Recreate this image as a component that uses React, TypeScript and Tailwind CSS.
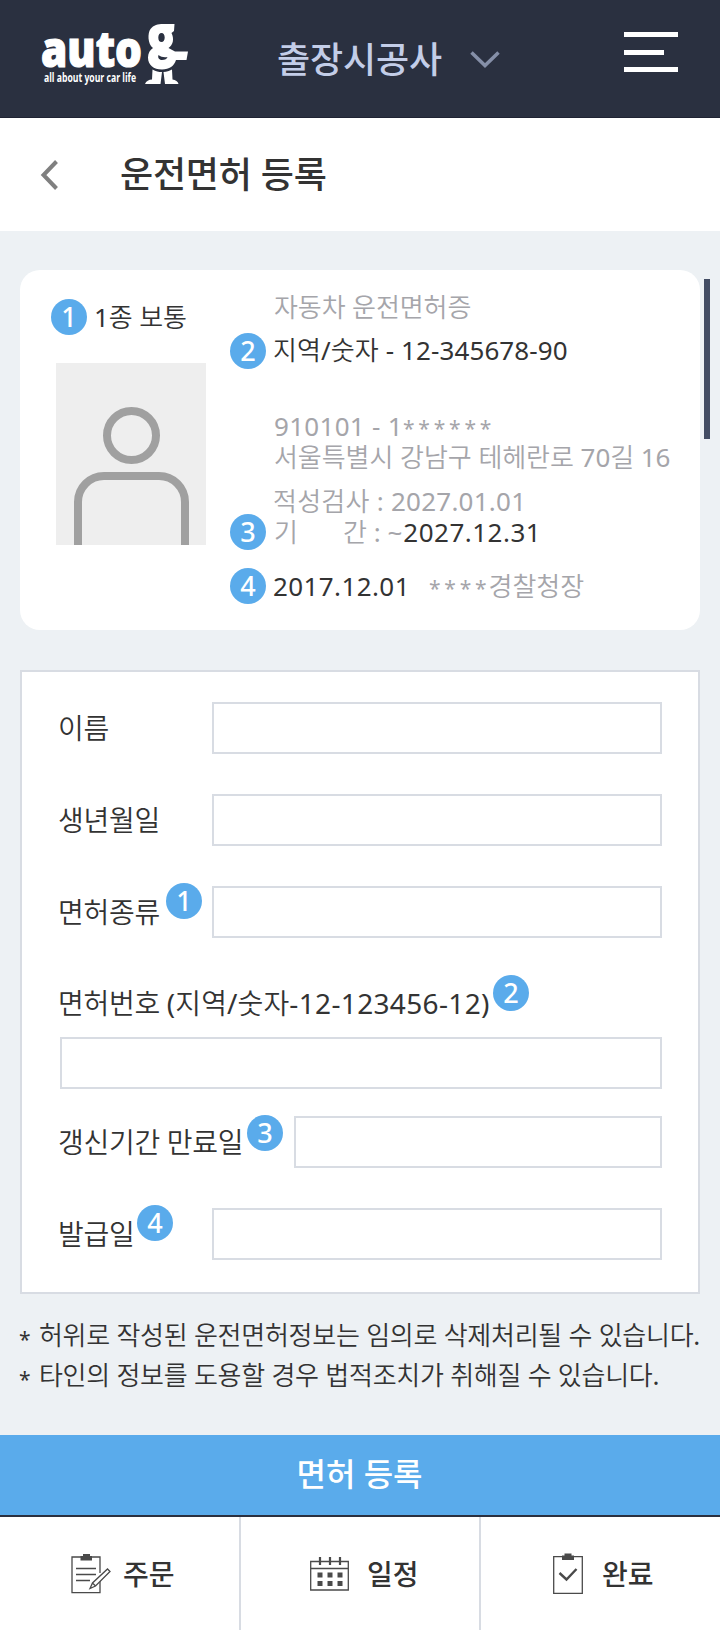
import React from "react";

function Badge({ n, className = "" }: { n: number; className?: string }) {
  return (
    <span
      className={
        "flex h-9 w-9 shrink-0 items-center justify-center rounded-full bg-[#5aabeb] text-[27px] leading-9 font-medium tracking-normal text-white " +
        className
      }
    >
      {n}
    </span>
  );
}

function Stars({ children }: { children: string }) {
  return <span className="relative top-[2px] text-[21px] leading-none font-normal tracking-[3.8px]">{children}</span>;
}

function Logo() {
  return (
    <svg width="150" height="66" viewBox="40 20 150 66" fill="#fff" className="shrink-0 overflow-visible">
      <text x="41" y="66.500" fontFamily="Open Sans" fontWeight="800" fontSize="49" stroke="#fff" strokeWidth="1.200" textLength="101" lengthAdjust="spacingAndGlyphs">
        auto
      </text>
      <text x="44" y="81.500" fontFamily="Open Sans" fontWeight="700" fontSize="12" textLength="92" lengthAdjust="spacingAndGlyphs">
        all about your car life
      </text>
      <path
        fillRule="evenodd"
        d="M174.500 24L174 31L171.500 33C174.500 39 173 45 168.500 48L175 51.500H188L186.500 60H176C174 66 169.500 69.500 162 69.500C153.500 69.500 148 65 148 57.500C148 53 150 50 153 48C147.500 44 147.500 33 150.500 29C153.500 25 158 24 163 24ZM161.500 33C159.500 33 158.300 35 158.300 37.500C158.300 40.500 159.500 42 161.500 42C163.500 42 164.700 40 164.700 37.500C164.700 35 163.500 33 161.500 33ZM158.500 55C157.500 57.500 159 60 162 60C165 60 167 59 167.500 57C164 57.500 161 57 158.500 55Z"
      />
      <path d="M152.500 69.500C156 71.500 158.500 72 162 72L160.500 84H145C146 81 149 79.500 152 79.500ZM163.500 72C167 71.700 169 71 172 69.500L172.500 79.500C175.500 80 178 81.500 178.500 84H165Z" />
    </svg>
  );
}

function OrderIcon() {
  return (
    <svg width="40" height="42" viewBox="0 0 40 42" fill="none" stroke="#4a4a4a" strokeWidth="1.300">
      <path d="M29 26V39.700H1V4H29V20" />
      <path d="M9.500 3H12V1H19V3H21V7.500H9.500Z" fill="#4a4a4a" stroke="none" />
      <path d="M5 15.500H25M5 21.500H25M5 27.500H19" strokeWidth="1.500" />
      <path d="M19 35.500L21.500 30L36.500 16L39 18.500L24.500 33ZM21.500 30L24.500 33" fill="#fff" />
    </svg>
  );
}

function CalendarIcon() {
  return (
    <svg width="39" height="34" viewBox="0 0 39 34" fill="none" stroke="#4a4a4a" strokeWidth="1.300">
      <path d="M.7 4.500H38.300V33H.7ZM.7 11.500H38.300" />
      <path d="M10 0V8M20 0V8M30 0V8" strokeWidth="2.200" />
      <path
        d="M7.500 15.500h5v5h-5zM17.500 15.500h5v5h-5zM27.500 15.500h5v5h-5zM7.500 24h5v5h-5zM17.500 24h5v5h-5zM27.500 24h5v5h-5z"
        fill="#4a4a4a"
        stroke="none"
      />
    </svg>
  );
}

function DoneIcon() {
  return (
    <svg width="30" height="42" viewBox="0 0 30 42" fill="none" stroke="#4a4a4a" strokeWidth="1.300">
      <path d="M.7 3.700H29.300V40.300H.7Z" />
      <path d="M9 2.500H11.500V.5H18.500V2.500H21V7H9Z" fill="#4a4a4a" stroke="none" />
      <path d="M6.500 20L13.500 26.500L23.500 16" strokeWidth="2.400" />
    </svg>
  );
}

const field = "h-[52px] border-2 border-[#d8dce3] bg-white outline-none";
const bodyFont = "[font-family:'Noto_Sans','Noto_Sans_CJK_KR_DemiLight','Noto_Sans_CJK_KR',sans-serif]";

function Field({
  label,
  badge,
  badgeClass = "",
  width = "w-[450px]",
}: {
  label: string;
  badge?: number;
  badgeClass?: string;
  width?: string;
}) {
  return (
    <div className="flex h-[52px] items-center justify-between">
      <div className="relative whitespace-nowrap">
        {label}
        {badge && <Badge n={badge} className={"absolute " + badgeClass} />}
      </div>
      <input aria-label={label} className={field + " " + width} />
    </div>
  );
}

export default function App() {
  return (
    <div className="flex h-[1630px] w-[720px] flex-col overflow-hidden bg-[#edf1f4] text-[#333] [font-family:'Noto_Sans','Noto_Sans_CJK_KR',sans-serif]">
      <header className="flex h-[118px] shrink-0 items-start border-b border-[#1f2333] bg-[#2a3040] pt-5 pl-10">
        <Logo />
        <div className="mt-[16px] ml-[87px] text-[36px] leading-[48px] font-medium tracking-[-0.1px] whitespace-nowrap text-[#c3cde8]">출장시공사</div>
        <svg width="30" height="18" viewBox="0 0 30 18" className="mt-[30px] ml-[28px] shrink-0" fill="none" stroke="#858fa8" strokeWidth="3.500">
          <path d="M1.500 2.500L15 15.500L28.500 2.500" />
        </svg>
        <div className="mt-[12px] ml-auto mr-[42px] flex w-[54px] flex-col gap-[12.5px]">
          <span className="h-[5px] bg-white" />
          <span className="h-[5px] w-10 bg-white" />
          <span className="h-[5px] bg-white" />
        </div>
      </header>

      <div className="flex h-[113px] shrink-0 items-center bg-white pl-10">
        <svg width="19" height="30" viewBox="0 0 19 30" fill="none" stroke="#808080" strokeWidth="4">
          <path d="M16.500 1.500L3.500 15L16.500 28.500" />
        </svg>
        <h1 className="ml-[61px] text-[36px] leading-[48px] font-medium tracking-[-0.2px]">운전면허 등록</h1>
      </div>

      <div className={"mt-[39px] flex shrink-0 " + bodyFont}>
        <section className="ml-5 flex h-[360px] w-[680px] rounded-[20px] bg-white text-[26px] leading-[30px] whitespace-nowrap">
          <div className="w-[210px] pt-[29px] pl-[31px]">
            <div className="flex h-9 items-center gap-[7px] tracking-[-0.1px]">
              <Badge n={1} />
              1종 보통
            </div>
            <svg width="150" height="182" viewBox="0 0 150 182" className="mt-7 ml-[5px] bg-[#eee]" fill="none" stroke="#a0a0a0" strokeWidth="8">
              <circle cx="75.500" cy="72.500" r="24.500" />
              <path d="M22 182V139A26 26 0 0 1 48 113H103A26 26 0 0 1 129 139V182" />
            </svg>
          </div>
          <div className="flex flex-col pt-[15px] text-[#a5a5aa]">
            <div className="flex h-11 items-center pl-11 tracking-[-0.1px]">자동차 운전면허증</div>
            <div className="flex h-11 items-center gap-[7px] tracking-[0.1px] text-[#333]">
              <Badge n={2} />
              <span className="relative -top-px">지역/숫자 - 12-345678-90</span>
            </div>
            <div className="mt-[37px] flex h-8 items-center pl-11 tracking-[0.3px]">
              <span>910101 - 1</span>
              <Stars>******</Stars>
            </div>
            <div className="flex h-[30px] items-center pl-11 tracking-[-0.05px]">서울특별시 강남구 테헤란로 70길 16</div>
            <div className="mt-[14px] flex h-[30px] items-center pl-[43px] tracking-[0.25px]">적성검사 : 2027.01.01</div>
            <div className="flex h-8 items-center">
              <Badge n={3} className="mr-2" />
              <span className="w-[69px]">기</span>
              <span>간 : ~</span>
              <span className="ml-px tracking-[0.5px] text-[#333]">2027.12.31</span>
            </div>
            <div className="mt-5 flex h-9 items-center">
              <Badge n={4} className="mr-[7px]" />
              <span className="w-[156px] tracking-[0.4px] text-[#333]">2017.12.01</span>
              <Stars>****</Stars>
              <span className="-ml-[2px]">경찰청장</span>
            </div>
          </div>
        </section>
        <div className="mt-[9px] ml-1 h-40 w-1.5 bg-[#424c63]" />
      </div>

      <form className={"mx-5 mt-10 flex h-[624px] shrink-0 flex-col border-2 border-[#d8dce3] bg-white pt-[30px] pr-9 pl-[36px] text-[28px] leading-10 tracking-[-0.3px] " + bodyFont}>
        <div className="flex flex-col gap-10">
          <Field label="이름" />
          <Field label="생년월일" />
          <Field label="면허종류" badge={1} badgeClass="left-[108px] top-[-9px]" />
        </div>
        <div className="relative mt-[45px] h-10 whitespace-nowrap">
          면허번호 <span className="tracking-[0.1px]">(지역/숫자</span>
          <span className="tracking-[0.35px]">-12-123456-12)</span>
          <Badge n={2} className="absolute top-[-8px] left-[435px]" />
        </div>
        <input aria-label="면허번호" className={field + " mt-[14px] ml-[2px] w-[602px]"} />
        <div className="mt-[27px] flex flex-col gap-10">
          <Field label="갱신기간 만료일" badge={3} badgeClass="left-[189px] top-[-7px]" width="w-[368px]" />
          <Field label="발급일" badge={4} badgeClass="left-[79px] top-[-9px]" />
        </div>
      </form>

      <div className={"mt-[21px] ml-[19px] text-[26px] leading-10 tracking-[-0.25px] whitespace-nowrap " + bodyFont}>
        <p><Stars>*</Stars><span className="-ml-[2px]"> 허위로 작성된 운전면허정보는 임의로 삭제처리될 수 있습니다.</span></p>
        <p><Stars>*</Stars><span className="-ml-[2px]"> 타인의 정보를 도용할 경우 법적조치가 취해질 수 있습니다.</span></p>
      </div>

      <button className="mt-auto h-[82px] shrink-0 border-b-2 border-[#2a3040] bg-[#5aabeb] pr-px pb-0.5 text-[32px] font-medium text-white">면허 등록</button>
      <nav className="flex h-[113px] shrink-0 bg-white text-[28px] font-medium">
        <div className="flex w-[241px] items-center border-r-2 border-[#d8dce3] pl-[71px]">
          <OrderIcon />
          <span className="ml-[12px]">주문</span>
        </div>
        <div className="flex w-60 items-center border-r-2 border-[#d8dce3] pl-[69px]">
          <CalendarIcon />
          <span className="ml-[18px]">일정</span>
        </div>
        <div className="flex flex-1 items-center pl-[72px]">
          <DoneIcon />
          <span className="ml-[19px]">완료</span>
        </div>
      </nav>
    </div>
  );
}
